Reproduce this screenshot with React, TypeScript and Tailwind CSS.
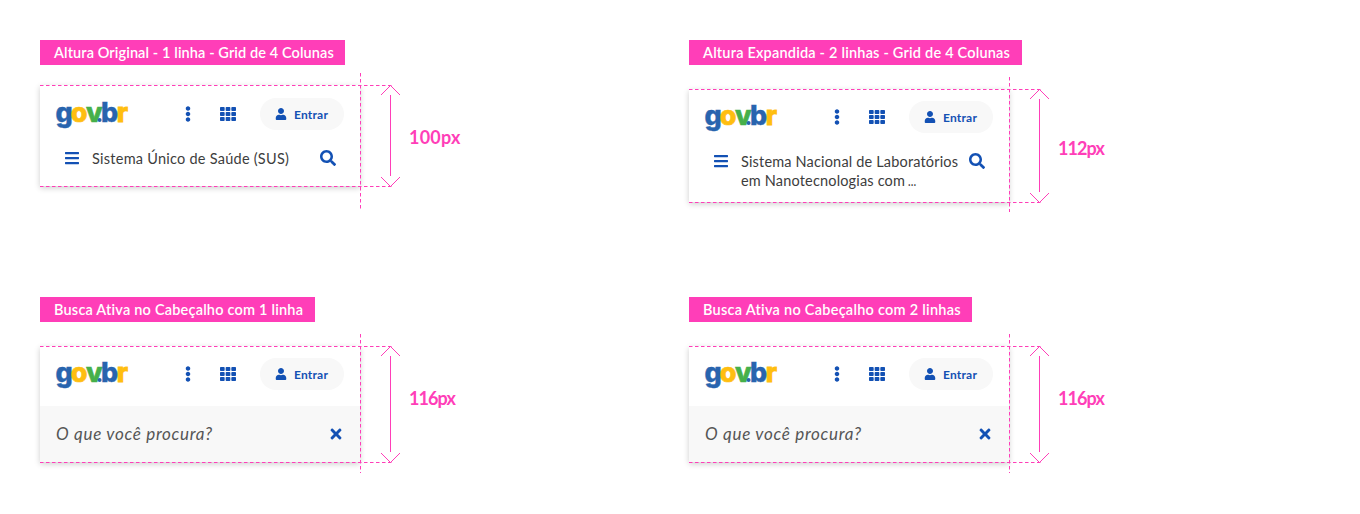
import type { ReactNode } from 'react';
import { FaBars, FaEllipsisV, FaSearch, FaTh, FaTimes, FaUser } from 'react-icons/fa';

const PINK = '#ff3eb8';

function Logo() {
  return (
    <svg width="74" height="32" viewBox="0 0 74 32" className="block overflow-visible font-['Inter',sans-serif] text-[27px] font-extrabold" aria-label="gov.br">
      <text y="24" x="-0.6" fill="#2864ae" stroke="#2864ae" strokeWidth="0.4">g</text>
      <text y="24" x="14.8" fill="#ffbe10" stroke="#ffbe10" strokeWidth="0.7">o</text>
      <text y="24" x="30" fill="#46b04a" stroke="#46b04a" strokeWidth="0.6">v</text>
      <text y="24" x="45" fill="#2864ae" stroke="#2864ae" strokeWidth="0.4">b</text>
      <text y="24" x="60.8" fill="#ffbe10" stroke="#ffbe10" strokeWidth="0.8">r</text>
      <circle cx="43.6" cy="22.1" r="2" fill="#2864ae" />
    </svg>
  );
}

function TopBar() {
  return (
    <div className="flex h-14 items-center px-4">
      <Logo />
      <div className="ml-auto flex items-center text-[#1351b4]">
        <div className="flex w-10 justify-center"><FaEllipsisV size={16} /></div>
        <div className="flex w-10 justify-center"><FaTh size={16} /></div>
        <button className="ml-3 flex h-8 w-[84px] items-center rounded-full bg-[#f8f8f8] pl-[15px]">
          <FaUser size={12} />
          <span className="ml-[7px] pt-0.5 text-[12px] leading-4 font-bold tracking-[0.2px]">Entrar</span>
        </button>
      </div>
    </div>
  );
}

function TitleRow({ children }: { children: ReactNode }) {
  return (
    <div className="flex items-start pr-4 pl-6 text-[#1351b4]">
      <FaBars size={16} className="mt-2 shrink-0" />
      <div className="ml-3 flex-1 pt-[7px] text-[14.5px] leading-[19px] whitespace-nowrap text-[#3d3d3d]">{children}</div>
      <FaSearch size={16} className="mt-2 mr-2 shrink-0" />
    </div>
  );
}

function SearchRow() {
  return (
    <div className="mt-1 flex h-14 items-center justify-between bg-[#f8f8f8] px-4">
      <span className="text-[17px] tracking-[0.7px] text-[#555] italic">O que você procura?</span>
      <FaTimes size={16} className="text-[#1351b4]" />
    </div>
  );
}

type SpecProps = {
  label: string;
  labelClass: string;
  gapClass: string;
  cardClass: string;
  height: number;
  above: number;
  below: number;
  measure: string;
  measureClass: string;
  children: ReactNode;
};

function Spec({ label, labelClass, gapClass, cardClass, height, above, below, measure, measureClass, children }: SpecProps) {
  const bottom = above + height;
  const mark = { fill: 'none', stroke: PINK, strokeWidth: 1 };
  return (
    <section>
      <h2 className={'flex h-[25px] items-center bg-[#ff3eb8] pl-3.5 text-[14.5px] font-semibold whitespace-nowrap text-white ' + labelClass}>
        {label}
      </h2>
      <div className={'relative flex items-start ' + gapClass}>
        <div className={'w-80 bg-white shadow-[0_2px_6px_rgba(0,0,0,0.2)] ' + cardClass}>
          <TopBar />
          {children}
        </div>
        <span className={'ml-[49px] text-[18px] leading-6 font-bold text-[#ff3eb8] ' + measureClass}>{measure}</span>
        <svg className="pointer-events-none absolute left-0" style={{ top: -above }} width="362" height={bottom + below} aria-hidden="true">
          <path d={`M320.5 0V${bottom + below}`} {...mark} strokeDasharray="3.5 2.5" />
        </svg>
        <svg className="pointer-events-none absolute top-0 left-0 overflow-visible" width="362" height={height} aria-hidden="true">
          <path d={`M0 .5H352M0 ${height + 0.5}H352`} {...mark} strokeDasharray="3.5 2.5" />
          <path d={`M350.5 10V${height - 10}`} {...mark} />
          <path d={`M341 10L350.5 .5L360 10M341 ${height - 9}L350.5 ${height + 0.5}L360 ${height - 9}`} {...mark} />
        </svg>
      </div>
    </section>
  );
}

export default function App() {
  return (
    <main className="grid h-[514px] w-[1360px] grid-cols-[649px_1fr] grid-rows-[257px_1fr] bg-white pt-10 pl-10 font-['Lato',sans-serif]">
      <Spec
        label="Altura Original - 1 linha - Grid de 4 Colunas"
        labelClass="w-[305px] tracking-[0.1px]"
        gapClass="mt-5"
        cardClass="h-[101px] pt-px"
        height={101}
        above={12}
        below={23}
        measure="100px"
        measureClass="mt-10 tracking-[0.2px]"
      >
        <div className="tracking-[0.25px]"><TitleRow>Sistema Único de Saúde (SUS)</TitleRow></div>
      </Spec>
      <Spec
        label="Altura Expandida - 2 linhas - Grid de 4 Colunas"
        labelClass="w-[333px] tracking-[0.2px]"
        gapClass="mt-6"
        cardClass="h-[113px]"
        height={113}
        above={12}
        below={10}
        measure="112px"
        measureClass="mt-[47px] -tracking-[0.9px]"
      >
        <div className="tracking-[0.17px]"><TitleRow>Sistema Nacional de Laboratórios<br />em Nanotecnologias com <span className="-ml-px inline-block origin-left scale-x-[0.75]">…</span></TitleRow></div>
      </Spec>
      <Spec
        label="Busca Ativa no Cabeçalho com 1 linha"
        labelClass="w-[275px] tracking-[0.2px]"
        gapClass="mt-6"
        cardClass="h-[116px]"
        height={116}
        above={12}
        below={11}
        measure="116px"
        measureClass="mt-10 -tracking-[0.9px]"
      >
        <SearchRow />
      </Spec>
      <Spec
        label="Busca Ativa no Cabeçalho com 2 linhas"
        labelClass="w-[283px] tracking-[0.26px]"
        gapClass="mt-6"
        cardClass="h-[116px]"
        height={116}
        above={12}
        below={11}
        measure="116px"
        measureClass="mt-10 -tracking-[0.9px]"
      >
        <SearchRow />
      </Spec>
    </main>
  );
}
